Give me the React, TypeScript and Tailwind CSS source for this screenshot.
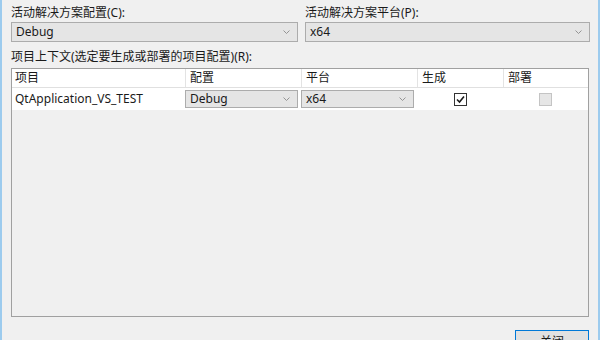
import React from 'react';

const font = { fontFamily: '"Noto Sans", "Noto Sans CJK SC", sans-serif' };

function Chevron() {
  return (
    <svg width="7" height="4" viewBox="0 0 7 4" className="shrink-0">
      <path d="M0.5 0.5 L3.5 3.5 L6.5 0.5" fill="none" stroke="#8a8a8a" strokeWidth="0.9" />
    </svg>
  );
}

function Combo({ value, className }: { value: string; className: string }) {
  return (
    <div
      className={`flex items-center justify-between bg-[#e5e5e5] border border-[#acacac] pl-[4px] pr-[7px] text-[12px] text-[#1a1a1a] ${className}`}
    >
      <span>{value}</span>
      <Chevron />
    </div>
  );
}

export default function App() {
  const cols = 'grid grid-cols-[173px_116px_116px_86px_1fr]';

  return (
    <div
      className="w-[600px] h-[340px] overflow-hidden bg-[#f0f0f0] border-l-2 border-r-2 border-[#9ccbee] pl-[9px] pr-[8px] flex flex-col"
      style={font}
    >
      {/* top selectors */}
      <div className="shrink-0 flex gap-[6px] pt-[5px]">
        <div className="w-[287px] flex flex-col">
          <div className="text-[12px] leading-[16px] text-[#1a1a1a]">活动解决方案配置(C):</div>
          <Combo value="Debug" className="mt-[1px] h-[20px]" />
        </div>
        <div className="flex-1 flex flex-col pl-[1px]">
          <div className="text-[12px] leading-[16px] text-[#1a1a1a]">活动解决方案平台(P):</div>
          <Combo value="x64" className="mt-[1px] h-[20px]" />
        </div>
      </div>

      <div className="shrink-0 mt-[7px] text-[12px] leading-[16px] text-[#1a1a1a]">
        项目上下文(选定要生成或部署的项目配置)(R):
      </div>

      {/* project grid */}
      <div className="shrink-0 mt-[3px] h-[249px] w-[578px] border border-[#a0a0a0] bg-[#f0f0f0] flex flex-col">
        <div className={`${cols} h-[19px] bg-white border-b border-[#e0e0e0] text-[12px] leading-[18px] text-[#1a1a1a]`}>
          <div className="pl-[3px]">项目</div>
          <div className="pl-[4px] border-l border-[#e3e3e3]">配置</div>
          <div className="pl-[4px] border-l border-[#e3e3e3]">平台</div>
          <div className="pl-[4px] border-l border-[#e3e3e3]">生成</div>
          <div className="pl-[4px] border-l border-[#e3e3e3]">部署</div>
        </div>
        <div className={`${cols} h-[22px] bg-white items-center text-[12px] text-[#1a1a1a]`}>
          <div className="pl-[3px]">QtApplication_VS_TEST</div>
          <div className="pr-[3px]">
            <Combo value="Debug" className="h-[18px]" />
          </div>
          <div className="pr-[3px]">
            <Combo value="x64" className="h-[18px]" />
          </div>
          <div className="flex justify-center">
            <div className="w-[13px] h-[13px] border border-[#333333] bg-white flex items-center justify-center">
              <svg width="11" height="11" viewBox="0 0 11 11">
                <path d="M2 5.5 L4.5 8 L9 2.5" fill="none" stroke="#1a1a1a" strokeWidth="1.6" />
              </svg>
            </div>
          </div>
          <div className="flex justify-center">
            <div className="w-[13px] h-[13px] border border-[#c4c4c4] bg-[#e6e6e6]" />
          </div>
        </div>
      </div>

      {/* buttons */}
      <div className="shrink-0 mt-[13px] flex justify-end pr-[1px]">
        <button className="w-[74px] h-[23px] border border-[#0078d7] bg-[#e1e1e1] text-[12px] text-[#1a1a1a] leading-[20px]">
          关闭
        </button>
      </div>
    </div>
  );
}
